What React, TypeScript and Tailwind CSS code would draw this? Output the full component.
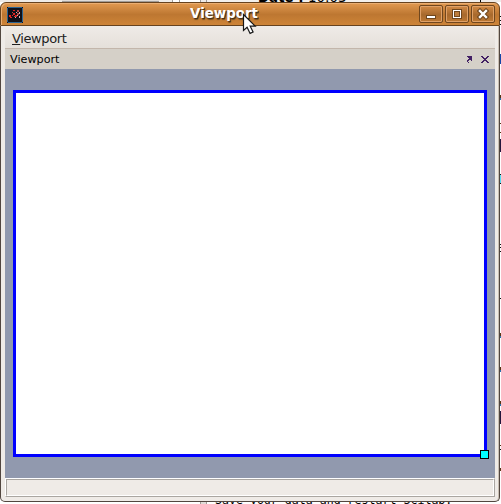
import React from "react";

const SANS = "font-['DejaVu_Sans',sans-serif]";

function EdgeFragments() {
  return (
    <svg width="2" height="498" viewBox="0 2 2 498" shapeRendering="crispEdges">
      <path
        d="M0 16h2v1H0zM0 20h2v1H0zM0 24h2v1H0zM1 174h1v1H1zM1 183h1v1H1zM1 244h1v1H1zM1 247h1v1H1zM1 251h1v1H1zM1 298h1v1H1zM1 449h1v1H1z"
        fill="#111"
      />
      <path d="M1 54h1v10H1z" fill="#1747a8" />
      <path d="M1 95h1v3H1zM1 333h1v3H1zM1 367h1v3H1zM1 401h1v3H1zM1 468h1v3H1z" fill="#573514" />
      <path d="M1 98h1v2H1zM1 336h1v2H1zM1 370h1v2H1zM1 404h1v2H1z" fill="#2a6fa8" />
      <path d="M1 123h1v1H1zM1 132h1v1H1zM1 445h1v1H1z" fill="#573514" />
      <path d="M1 139h1v13H1zM1 411h1v13H1z" fill="#24153c" />
      <path d="M1 175h1v8H1z" fill="#55dcf0" />
    </svg>
  );
}

function Desktop() {
  return (
    <div className="absolute inset-0 flex flex-col overflow-hidden bg-white">
      <div className="flex h-[2px] shrink-0 items-end bg-[#efebe7] pl-[62px]">
        <div className="h-[2px] w-[97px] border-b border-[#a09c98] bg-[#e0dcd8]" />
        <div className="ml-[13px] h-[2px] w-[8px] border-x border-[#a09c98] bg-white" />
        <div className="h-[2px] w-[20px] bg-white" />
        <div className="h-[2px] w-[7px] border-x border-[#a09c98]" />
        <div
          className={`flex h-[2px] w-[274px] items-end border-r border-black bg-[#f3f0ed] pl-[51px] text-[13.4px] leading-[14px] text-black ${SANS}`}
        >
          <p className="-mb-[3px] whitespace-pre">
            <b>Date :</b> 10:03
          </p>
        </div>
      </div>
      <div className="flex h-[498px] shrink-0 justify-end">
        <EdgeFragments />
      </div>
      <div className="flex h-1 shrink-0 items-end pl-[200px]">
        <div className="h-1 w-[7px] border-x border-[#a09c98] bg-[#e0dcd8]" />
        <p className="-mb-[3px] pl-2 whitespace-pre font-['DejaVu_Sans_Mono',monospace] text-[11.6px] leading-[14px] text-black">
          Save your data and restart Scilab.
        </p>
      </div>
    </div>
  );
}

function AppIcon() {
  return (
    <svg width="16" height="16" viewBox="0 0 16 16" shapeRendering="crispEdges">
      <path d="M0 0h16v16H0z" fill="#101018" />
      <path d="M1 .5h14M.5 1v14M15.5 1v14M1 15.5h14" stroke="#2a6392" />
      <path d="M2 8h2v2H2zM3 10h2v1H3zM5 8h1v1H5zM6 6h2v2H6zM8 8h2v2H8zM6 3h2v1H6z" fill="#e0251f" />
      <path d="M5 5h1v1H5zM10 3h2v2h-2zM10 6h2v2h-2zM7 9h1v1H7z" fill="#b04440" />
      <path d="M9 5h1v1H9zM10 8h1v1h-1zM12 9h1v2h-1zM8 10h1v1H8zM12 5h1v2h-1z" fill="#d6b0b0" />
    </svg>
  );
}

function TitleButton({ label, children }: { label: string; children: React.ReactNode }) {
  return (
    <button
      aria-label={label}
      className="flex h-[18px] w-6 items-center justify-center rounded-[2px] border border-[#70471e] bg-linear-to-b from-[#d38b45] via-[#a7692d] via-55% to-[#bf7a34] shadow-[inset_0_0_0_1px_#dfa168]"
    >
      {children}
    </button>
  );
}

function TitleBar() {
  return (
    <header className="flex h-6 shrink-0 items-start rounded-t-[6px] border border-[#67431f] bg-linear-to-b from-[#e29a51] via-[#bd7731] via-52% to-[#cd8438] pl-[6px] pr-1 shadow-[inset_1px_1px_0_#eaae72]">
      <div className="pt-[4px]">
        <AppIcon />
      </div>
      <h1
        className={`flex-1 pl-[167px] pt-[3px] text-[13.4px] font-bold leading-4 text-white [text-shadow:1px_1px_0_#4a3018,1px_2px_1px_#79501f] ${SANS}`}
      >
        Viewport
      </h1>
      <div className="flex gap-[2px] pt-[2px]">
        <TitleButton label="Minimize">
          <svg width="12" height="12" shapeRendering="crispEdges">
            <path d="M1 7h10v4H1z" fill="#70471e" />
            <path d="M2 8h8v2H2z" fill="#fff" />
          </svg>
        </TitleButton>
        <TitleButton label="Maximize">
          <svg width="12" height="12" shapeRendering="crispEdges">
            <path d="M1 1h10v10H1z" fill="#70471e" />
            <path d="M2 2h8v8H2z" fill="#fff" />
            <path d="M3 3h6v6H3z" fill="#70471e" />
            <path d="M4 4h4v4H4z" fill="#bd7c3b" />
          </svg>
        </TitleButton>
        <TitleButton label="Close">
          <svg width="12" height="12">
            <path d="M3 3l6 6m0-6l-6 6" stroke="#70471e" strokeWidth="4.5" strokeLinecap="square" />
            <path d="M3 3l6 6m0-6l-6 6" stroke="#fff" strokeWidth="2.4" strokeLinecap="square" />
          </svg>
        </TitleButton>
      </div>
    </header>
  );
}

function DockHeader() {
  return (
    <div className="flex h-5 shrink-0 items-start bg-[#d5d0c8] pl-[5px] pr-[6px]">
      <span className={`flex-1 pt-[4px] text-[11.2px] leading-[14px] text-black ${SANS}`}>Viewport</span>
      <svg className="mt-[7px]" width="22" height="7" viewBox="0 0 22 7" shapeRendering="crispEdges">
        <path d="M0 0h5v5H4V4H2v1H1v1h1v1H1V6H0V4h1V3h1V2H1V1H0z" fill="#432064" />
        <path
          d="M14 0h2v1h1v1h2V1h1V0h2v1h-1v1h-1v1h-1v1h1v1h1v1h1v1h-2V6h-1V5h-2v1h-1v1h-2V6h1V5h1V4h1V3h-1V2h-1V1h-1z"
          fill="#432064"
        />
      </svg>
    </div>
  );
}

function Viewport() {
  return (
    <main className="flex h-[409px] shrink-0 flex-col bg-[#9199ae] px-2 pt-[21px]">
      <div className="relative h-[367px] w-[474px] border-[3px] border-[#0000ff] bg-white">
        <div className="absolute -bottom-[5px] -right-[5px] size-[9px] border border-black bg-[#00ffff]" />
      </div>
    </main>
  );
}

function StatusBar() {
  return (
    <footer className="h-[19px] shrink-0 border-b border-l border-r border-t border-b-[#aaa6a1] border-l-white border-r-[#aaa6a1] border-t-white bg-[#efebe7]">
      <div className="h-[17px] border border-b-white border-l-[#aaa6a1] border-r-white border-t-[#aaa6a1]" />
    </footer>
  );
}

export default function App() {
  return (
    <div className="relative h-[504px] w-[501px] overflow-hidden">
      <Desktop />
      <div className="relative flex w-[500px] flex-col pt-[2px]">
        <TitleBar />
        <div className="flex h-[476px] flex-col rounded-b-[5px] border-x border-b border-[#51463f] bg-[#efebe7] px-1 shadow-[inset_-1px_0_0_#c8beb2]">
          <nav
            className={`flex h-[23px] shrink-0 items-start border-b border-[#c3b6ab] bg-linear-to-b from-[#efebe7] to-[#e5e0da] pl-[7px] pt-[5px] text-[13px] leading-4 tracking-[-0.38px] text-[#202020] ${SANS}`}
          >
            <p>
              <span className="underline decoration-1 underline-offset-[1px]">V</span>iewport
            </p>
          </nav>
          <DockHeader />
          <Viewport />
          <StatusBar />
        </div>
      </div>
      <svg className="absolute left-[242px] top-[13px]" width="16" height="23" viewBox="0 0 16 23">
        <path d="M1.5 1.5v16l3.6-3.3 3 6.2 3-1.4-2.9-5.8h5z" fill="#fff" stroke="#171717" strokeWidth="1.2" />
      </svg>
    </div>
  );
}
